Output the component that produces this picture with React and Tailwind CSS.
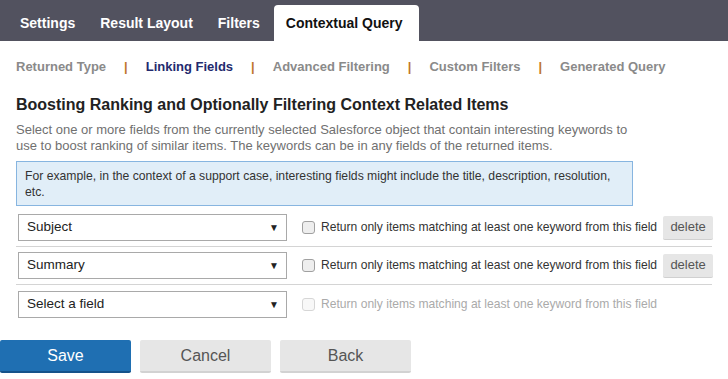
import { useState } from 'react';

const tabs = ['Settings', 'Result Layout', 'Filters', 'Contextual Query'];
const steps = ['Returned Type', 'Linking Fields', 'Advanced Filtering', 'Custom Filters', 'Generated Query'];

function FieldRow({ value, enabled, last }) {
  return (
    <div className={`flex items-center h-[38px] ${last ? '' : 'border-b border-[#d4d4d4]'}`}>
      <div className="shrink-0 ml-[2px] w-[269px] h-[27px] border border-[#a9a9a9] bg-white flex items-center justify-between pl-[8px] pr-[7px]">
        <span className="text-[13.5px] text-[#222]">{value}</span>
        <span className="text-[10px] text-[#222]">▼</span>
      </div>
      <div
        className={`shrink-0 ml-[15px] w-[13px] h-[13px] rounded-[3px] border ${enabled ? 'border-[#a0a0a0] bg-[#eeeeee]' : 'border-[#d6d6d6] bg-[#f8f8f8]'}`}
      />
      <span className={`ml-[6px] whitespace-nowrap text-[12.1px] ${enabled ? 'text-[#333]' : 'text-[#aaa]'}`}>
        Return only items matching at least one keyword from this field
      </span>
      {enabled && (
        <button className="shrink-0 ml-[6px] w-[50px] h-[24px] rounded-[2px] bg-[#e6e6e6] border-b border-[#d0d0d0] text-[13px] text-[#555]">
          delete
        </button>
      )}
    </div>
  );
}

export default function App() {
  const [active] = useState(3);
  return (
    <div className="w-[728px] h-[379px] bg-white overflow-hidden font-['Liberation_Sans',Arial,sans-serif]">
      {/* Tab bar */}
      <div className="h-[41px] bg-[#52525f] flex items-end pl-[8px] gap-[1px]">
        {tabs.map((t, i) => (
          <div
            key={t}
            className={`h-[36px] flex items-center pl-[12px] text-[14px] font-bold ${i === active ? 'bg-white text-[#111] rounded-t-[4px] ml-[1px] pr-[16px]' : 'text-white pr-[12px]'}`}
          >
            {t}
          </div>
        ))}
      </div>

      {/* Sub steps */}
      <div className="flex items-center pl-[16px] mt-[18px] h-[16px] text-[13px] font-bold">
        {steps.map((s, i) => (
          <div key={s} className="flex items-center">
            {i > 0 && <span className="mx-[18px] text-[#c0772d]">|</span>}
            <span className={i === 1 ? 'text-[#232a6e]' : 'text-[#8a8a8a]'}>{s}</span>
          </div>
        ))}
      </div>

      <div className="px-[16px]">
        <h2 className="mt-[21px] text-[16px] font-bold text-[#222] leading-[18px]">
          Boosting Ranking and Optionally Filtering Context Related Items
        </h2>
        <p className="mt-[8px] text-[13px] leading-[16px] text-[#707070] w-[625px]">
          Select one or more fields from the currently selected Salesforce object that contain interesting keywords to
          use to boost ranking of similar items. The keywords can be in any fields of the returned items.
        </p>
        <div className="mt-[7px] w-[617px] h-[45px] bg-[#e1eef8] border border-[#87b5e0] px-[8px] pt-[6px] text-[12.2px] leading-[16px] text-[#333]">
          For example, in the context of a support case, interesting fields might include the title, description, resolution,
          etc.
        </div>

        <div className="mt-[3px]">
          <FieldRow value="Subject" enabled />
          <FieldRow value="Summary" enabled />
          <FieldRow value="Select a field" last />
        </div>
      </div>

      {/* Actions */}
      <div className="mt-[17px] flex gap-[9px]">
        <button className="w-[131px] h-[33px] rounded-[2px] bg-[#1f6fb2] border-b-2 border-[#15528a] text-white text-[16px]">
          Save
        </button>
        <button className="w-[131px] h-[33px] rounded-[2px] bg-[#e6e6e6] border-b-2 border-[#d2d2d2] text-[#555] text-[16px]">
          Cancel
        </button>
        <button className="w-[131px] h-[33px] rounded-[2px] bg-[#e6e6e6] border-b-2 border-[#d2d2d2] text-[#555] text-[16px]">
          Back
        </button>
      </div>
    </div>
  );
}
